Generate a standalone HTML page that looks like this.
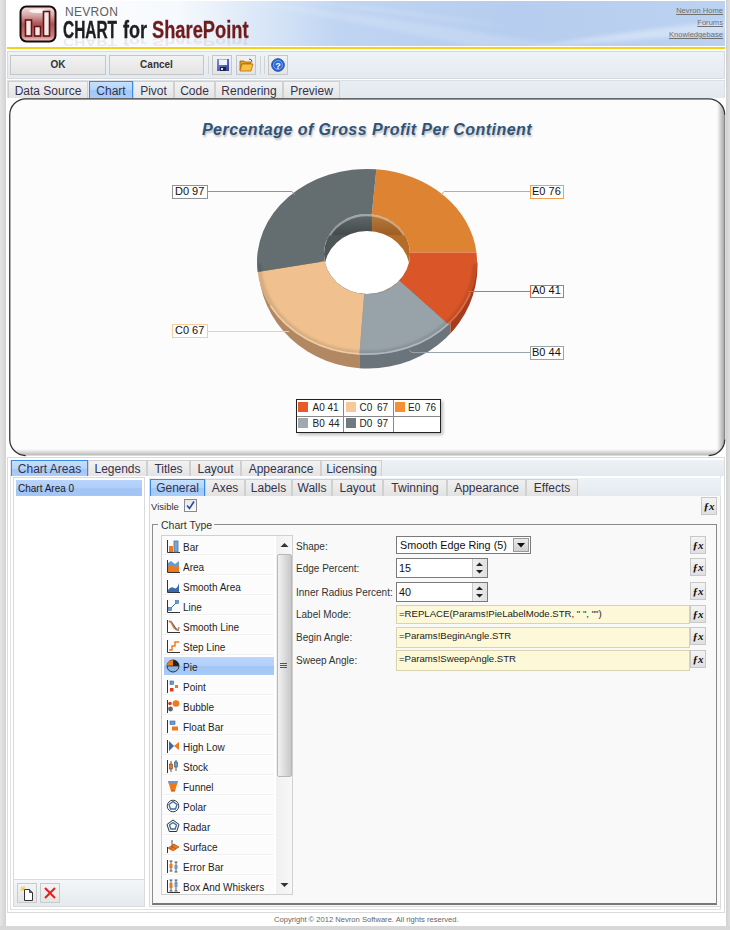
<!DOCTYPE html>
<html><head><meta charset="utf-8">
<style>
*{box-sizing:border-box;margin:0;padding:0}
html,body{width:730px;height:930px;overflow:hidden;background:#fff}
body{position:relative;font-family:"Liberation Sans",sans-serif;color:#222}
.a{position:absolute}
.t{position:absolute;white-space:nowrap;line-height:1}
.tab{position:absolute;height:17px;background:linear-gradient(#f2f2f2,#e4e4e4);border:1px solid #d0d0d0;border-bottom:none;font-size:12px;color:#33334d;text-align:center;line-height:18px;white-space:nowrap}
.tab.sel{background:linear-gradient(#c6e0fd 0%,#b4d4fb 50%,#a2c8f7 52%,#aaccf8 100%);border-color:#3c8ae8}
.stab{position:absolute;height:17px;background:linear-gradient(#f0f0f0,#e2e2e2);border:1px solid #d0d0d0;border-bottom:none;font-size:12px;color:#33334d;text-align:center;line-height:16px;white-space:nowrap}
.stab.sel{background:linear-gradient(#c6e0fd 0%,#b4d4fb 50%,#a2c8f7 52%,#aaccf8 100%);border-color:#3c8ae8}
.lbl{position:absolute;font-size:10px;color:#333;white-space:nowrap;line-height:1}
.fx{position:absolute;width:16px;height:18px;background:linear-gradient(#f4f4f4,#e0e0e0);border:1px solid #c8c8c8;font-family:"Liberation Serif",serif;font-style:italic;font-weight:bold;font-size:11px;text-align:center;line-height:16px;color:#111}
.yel{position:absolute;left:396px;width:294px;background:#fcf8d8;border:1px solid #d8d4b0;font-size:9.6px;color:#222;padding:1.5px 0 0 2px;white-space:nowrap}
.row{position:absolute;left:162px;width:112px;height:20px;border-bottom:1px solid #f0f0f0;background:#fcfcfc}
.row span{position:absolute;left:21px;top:6px;font-size:10px;line-height:1;color:#333;white-space:nowrap}
.row svg{position:absolute;left:4px;top:3px}
</style></head><body>

<!-- outer gray bands -->
<div class="a" style="left:0;top:0;width:6px;height:930px;background:linear-gradient(90deg,#e6e6e6,#d2d2d2)"></div>
<div class="a" style="left:726px;top:0;width:4px;height:930px;background:linear-gradient(90deg,#d0d0d0,#e0e0e0)"></div>
<div class="a" style="left:0;top:926px;width:730px;height:4px;background:#d8d8d8"></div>

<!-- header -->
<div class="a" style="left:7px;top:1px;width:718px;height:45px;overflow:hidden;background:linear-gradient(90deg,#ffffff 0%,#f6f9fd 24%,#dde9f8 34%,#c0d5f2 46%,#b6cdef 70%,#bcd2f1 100%)">
<svg class="a" style="left:0;top:0" width="718" height="45" viewBox="0 0 718 45">
<defs><filter id="hb" x="-20%" y="-50%" width="140%" height="200%"><feGaussianBlur stdDeviation="2"/></filter></defs>
<path d="M260 -4 Q380 8 520 28 Q410 14 260 -4z" fill="#fff" opacity="0.5" filter="url(#hb)"/>
<path d="M240 0 Q400 18 560 46 L470 46 Q350 22 240 0z" fill="#fff" opacity="0.15" filter="url(#hb)"/>
<path d="M520 47 Q620 30 718 20 L718 32 Q640 38 520 47z" fill="#fff" opacity="0.35" filter="url(#hb)"/>
</svg>
<div class="t" style="left:56.4px;top:46px;font-size:23.5px;font-weight:bold;color:#1e1e1e;transform:scaleX(0.657) scaleY(-0.5);transform-origin:0 0;opacity:0.08">CHART</div>
<div class="t" style="left:116px;top:46px;font-size:23.5px;font-weight:bold;color:#1e1e1e;transform:scaleX(0.766) scaleY(-0.5);transform-origin:0 0;opacity:0.08">for</div>
<div class="t" style="left:145px;top:46px;font-size:23.5px;font-weight:bold;color:#6e1c1c;transform:scaleX(0.778) scaleY(-0.5);transform-origin:0 0;opacity:0.08">SharePoint</div>
</div>
<div class="a" style="left:7px;top:47px;width:718px;height:2px;background:#f2d21e"></div>

<!-- logo -->
<svg class="a" style="left:19px;top:5px" width="38" height="38" viewBox="0 0 38 38">
<defs>
<linearGradient id="lg1" x1="0" y1="0" x2="0" y2="1"><stop offset="0" stop-color="#f4e4e4"/><stop offset="0.25" stop-color="#d8a8a8"/><stop offset="0.5" stop-color="#a85454"/><stop offset="0.85" stop-color="#c88080"/><stop offset="1" stop-color="#f0d8d8"/></linearGradient>
</defs>
<rect x="1.5" y="1.5" width="35" height="35" rx="6" fill="url(#lg1)" stroke="#1a0a0a" stroke-width="2"/>
<ellipse cx="19" cy="6" rx="9" ry="2" fill="#fff" opacity="0.8"/>
<rect x="6.5" y="15" width="6" height="16" fill="#f4e8e8" stroke="#6a1010" stroke-width="1.6"/>
<rect x="15.5" y="21.5" width="6" height="9.5" fill="#f4e8e8" stroke="#6a1010" stroke-width="1.6"/>
<rect x="24.5" y="6.5" width="6" height="24.5" fill="#f4e8e8" stroke="#6a1010" stroke-width="1.6"/>
</svg>
<div class="t" style="left:65px;top:6px;font-size:12px;color:#606060;letter-spacing:0.3px">NEVRON</div>
<div class="t" style="left:63.4px;top:19px;font-size:23.5px;font-weight:bold;color:#1e1e1e;transform:scaleX(0.657);transform-origin:0 0;-webkit-text-stroke:0.4px #1e1e1e">CHART</div>
<div class="t" style="left:123px;top:19px;font-size:23.5px;font-weight:bold;color:#1e1e1e;transform:scaleX(0.766);transform-origin:0 0;-webkit-text-stroke:0.3px #1e1e1e">for</div>
<div class="t" style="left:152px;top:19px;font-size:23.5px;font-weight:bold;color:#6e1c1c;transform:scaleX(0.778);transform-origin:0 0;-webkit-text-stroke:0.3px #6e1c1c">SharePoint</div>
<div class="t" style="right:7px;top:7px;font-size:7.6px;color:#707070;text-decoration:underline;text-align:right">Nevron Home</div>
<div class="t" style="right:7px;top:19px;font-size:7.6px;color:#707070;text-decoration:underline">Forums</div>
<div class="t" style="right:7px;top:31px;font-size:7.6px;color:#707070;text-decoration:underline">Knowledgebase</div>

<!-- toolbar -->
<div class="a" style="left:7px;top:51px;width:718px;height:28px;background:linear-gradient(#eef3f6,#e3eaf0);border:1px solid #d6dade"></div>
<div class="a" style="left:10px;top:55px;width:96px;height:20px;background:linear-gradient(#f2f2f2,#e4e4e4);border:1px solid #c6c6c6;font-size:10px;font-weight:bold;color:#333;text-align:center;line-height:18px">OK</div>
<div class="a" style="left:109px;top:55px;width:95px;height:20px;background:linear-gradient(#f2f2f2,#e4e4e4);border:1px solid #c6c6c6;font-size:10px;font-weight:bold;color:#333;text-align:center;line-height:18px">Cancel</div>
<div class="a" style="left:208px;top:56px;width:1px;height:18px;background:#d0d4d8"></div>
<div class="a" style="left:212px;top:55px;width:20px;height:20px;background:linear-gradient(#f2f2f2,#e4e4e4);border:1px solid #c6c6c6"></div>
<div class="a" style="left:236px;top:55px;width:20px;height:20px;background:linear-gradient(#f2f2f2,#e4e4e4);border:1px solid #c6c6c6"></div>
<div class="a" style="left:260px;top:56px;width:1px;height:18px;background:#d0d4d8"></div><div class="a" style="left:264px;top:56px;width:1px;height:18px;background:#d0d4d8"></div>
<div class="a" style="left:268px;top:55px;width:20px;height:20px;background:linear-gradient(#f2f2f2,#e4e4e4);border:1px solid #c6c6c6"></div>
<svg class="a" style="left:217px;top:59px" width="12" height="12" viewBox="0 0 12 12">
<defs><linearGradient id="sv" x1="0" y1="0" x2="1" y2="1"><stop offset="0" stop-color="#8090e0"/><stop offset="1" stop-color="#3040a0"/></linearGradient></defs>
<rect x="0" y="0" width="12" height="12" fill="url(#sv)"/>
<rect x="2" y="0.5" width="8" height="5.5" fill="#eef2fc"/>
<rect x="3" y="8" width="6" height="4" fill="#202040"/><rect x="4" y="9" width="2" height="2" fill="#e0e0e0"/>
</svg>
<svg class="a" style="left:239px;top:58px" width="15" height="14" viewBox="0 0 15 14">
<path d="M1 3h4l1 1h6v2H3L1 12z" fill="#e0a020" stroke="#a06010" stroke-width="0.8"/>
<path d="M3 6h11l-2 7H1z" fill="#f8c040" stroke="#b07010" stroke-width="0.8"/>
<path d="M10 1q3 0 3 3" fill="none" stroke="#4060a0" stroke-width="1"/>
</svg>
<svg class="a" style="left:271px;top:58px" width="14" height="14" viewBox="0 0 14 14">
<circle cx="7" cy="7" r="6.3" fill="#2a6ad8" stroke="#1a4aa8"/>
<circle cx="7" cy="7" r="4.5" fill="none" stroke="#80b0f0" stroke-width="0.8"/>
<text x="7" y="10.5" font-size="9" font-weight="bold" fill="#fff" text-anchor="middle" font-family="Liberation Sans">?</text>
</svg>

<!-- main tabs -->
<div class="a" style="left:7px;top:80px;width:718px;height:18px;background:linear-gradient(#e8eef3,#e2e9ef);border:1px solid #dadfe3;border-bottom:none"></div>
<div class="tab" style="left:8px;top:81px;width:80px">Data Source</div>
<div class="tab sel" style="left:89px;top:81px;width:44px">Chart</div>
<div class="tab" style="left:133px;top:81px;width:41px">Pivot</div>
<div class="tab" style="left:174px;top:81px;width:41px">Code</div>
<div class="tab" style="left:215px;top:81px;width:68px">Rendering</div>
<div class="tab" style="left:283px;top:81px;width:57px">Preview</div>


<!-- chart panel -->
<svg class="a" style="left:0;top:90px" width="730" height="370" viewBox="0 90 730 370">
<defs>
<clipPath id="cpanel"><path d="M25.75,98.75 H708.75 A16,16 0 0 1 724.75,114.75 V439.5 A16,16 0 0 1 708.75,455.5 H25.75 A16,16 0 0 1 9.75,439.5 V114.75 A16,16 0 0 1 25.75,98.75 Z"/></clipPath>
<linearGradient id="shR" x1="717" y1="0" x2="725" y2="0" gradientUnits="userSpaceOnUse"><stop offset="0" stop-color="#000" stop-opacity="0"/><stop offset="1" stop-color="#000" stop-opacity="0.38"/></linearGradient>
<linearGradient id="shB" x1="0" y1="449" x2="0" y2="456" gradientUnits="userSpaceOnUse"><stop offset="0" stop-color="#000" stop-opacity="0"/><stop offset="1" stop-color="#000" stop-opacity="0.30"/></linearGradient>
</defs>
<g clip-path="url(#cpanel)">
<rect x="0" y="90" width="730" height="370" fill="#fcfcfc"/>
<rect x="700" y="90" width="30" height="370" fill="url(#shR)"/>
<rect x="0" y="440" width="730" height="20" fill="url(#shB)"/>
</g>
<path d="M25.75,455.5 A16,16 0 0 1 9.75,439.5 V114.75 A16,16 0 0 1 25.75,98.75 H708.75 A16,16 0 0 1 724.75,114.75" fill="none" stroke="#333" stroke-width="1.25"/>
<path d="M724.75,114.75 V439.5" fill="none" stroke="#777" stroke-width="1"/>
<path d="M724.75,439.5 A16,16 0 0 1 708.75,455.5" fill="none" stroke="#333" stroke-width="1.25"/>
</svg>
<div class="t" style="left:202px;top:122px;font-size:16px;font-weight:bold;font-style:italic;color:#30537a;letter-spacing:0.45px;text-shadow:1px 2px 2px rgba(0,0,0,0.25)">Percentage of Gross Profit Per Continent</div>
<!--DONUT-->
<svg class="a" style="left:0;top:0" width="730" height="460" viewBox="0 0 730 460">
<defs>
<clipPath id="hole"><ellipse cx="367" cy="254" rx="43" ry="40"/></clipPath>
<clipPath id="topface"><ellipse cx="367" cy="262" rx="110" ry="93"/></clipPath>
<linearGradient id="sideg" x1="0" y1="0" x2="0" y2="1"><stop offset="0" stop-color="#000" stop-opacity="0.10"/><stop offset="0.5" stop-color="#000" stop-opacity="0"/><stop offset="1" stop-color="#fff" stop-opacity="0.05"/></linearGradient>
<linearGradient id="holeg" x1="0" y1="0" x2="0" y2="1"><stop offset="0" stop-color="#fff" stop-opacity="0.18"/><stop offset="1" stop-color="#000" stop-opacity="0.12"/></linearGradient>
<filter id="blur1"><feGaussianBlur stdDeviation="1.2"/></filter><filter id="blur05" x="-10%" y="-10%" width="120%" height="120%"><feGaussianBlur stdDeviation="0.5"/></filter>
</defs>
<clipPath id="sC"><rect x="200" y="262" width="159.3" height="140"/></clipPath>
<clipPath id="sB"><rect x="359.3" y="262" width="91.1" height="140"/></clipPath>
<clipPath id="sA"><rect x="450.4" y="262" width="100" height="140"/></clipPath>
<ellipse cx="368" cy="266" rx="109.5" ry="102.5" fill="#b28862" clip-path="url(#sC)"/>
<ellipse cx="368" cy="266" rx="109.5" ry="102.5" fill="#6b747a" clip-path="url(#sB)"/>
<ellipse cx="368" cy="266" rx="109.5" ry="102.5" fill="#a63c1e" clip-path="url(#sA)"/>
<path d="M376.37,169.34 A110,93 0 0 1 476.42,252.45 L409.97,252.60 A43,40 0 0 0 371.77,214.25 Z" fill="#dd8331"/>
<path d="M476.42,252.45 A110,93 0 0 1 448.57,324.40 L399.29,280.42 A43,40 0 0 0 409.97,252.60 Z" fill="#da5629"/>
<path d="M448.57,324.40 A110,93 0 0 1 359.34,354.77 L364.18,293.91 A43,40 0 0 0 399.29,280.42 Z" fill="#98a2a9"/>
<path d="M359.34,354.77 A110,93 0 0 1 257.63,271.94 L324.72,261.30 A43,40 0 0 0 364.18,293.91 Z" fill="#f0c18f"/>
<path d="M257.63,271.94 A110,93 0 0 1 376.37,169.34 L371.77,214.25 A43,40 0 0 0 324.72,261.30 Z" fill="#646e70"/>
<g clip-path="url(#topface)">
<path d="M476.98,263.86 A110,93 0 0 1 257.02,263.86" fill="none" stroke="#000" stroke-opacity="0.10" stroke-width="9" filter="url(#blur1)"/>
</g>
<path d="M470.33,293.09 A110,93 0 0 1 448.57,323.60" fill="none" stroke="#f08060" stroke-width="1.8" stroke-opacity="0.6" filter="url(#blur05)"/>
<path d="M448.57,323.60 A110,93 0 0 1 359.34,353.97" fill="none" stroke="#c8d0d6" stroke-width="1.8" stroke-opacity="0.6" filter="url(#blur05)"/>
<path d="M359.34,353.97 A110,93 0 0 1 270.47,305.79" fill="none" stroke="#fde0bc" stroke-width="1.8" stroke-opacity="0.6" filter="url(#blur05)"/>
<g clip-path="url(#hole)">
<rect x="320" y="210" width="52" height="90" fill="#4e5658"/>
<rect x="371.8" y="210" width="45" height="90" fill="#b46c26"/>
<rect x="320" y="210" width="100" height="25" fill="url(#holeg)"/>
<path d="M329.76,235.20 A43,40 0 0 1 404.24,235.20" fill="none" stroke="#fff" stroke-opacity="0.4" stroke-width="2.2" filter="url(#blur05)"/>
<ellipse cx="367" cy="271" rx="43" ry="40" fill="#fff"/>
</g>
<polyline points="208,191.5 292,191.5 295,195" fill="none" stroke="#8a949a" stroke-width="1"/>
<polyline points="441,195 444,191.5 530,191.5" fill="none" stroke="#f0a050" stroke-width="1"/>
<polyline points="468,291.5 530,291.5" fill="none" stroke="#e8683c" stroke-width="1"/>
<polyline points="409,350 412,352.5 530,352.5" fill="none" stroke="#9aa4ae" stroke-width="1"/>
<polyline points="208,331.5 289,331.5" fill="none" stroke="#f8cc9c" stroke-width="1"/>
</svg>
<!--/DONUT-->
<div class="a" style="left:172px;top:185px;width:36px;height:14px;border:1px solid #8a949a;background:#fff;font-size:11px;line-height:10px;padding-left:2px;color:#111;white-space:nowrap">D0 97</div>
<div class="a" style="left:530px;top:185px;width:34px;height:14px;border:1px solid #f0a050;background:#fff;font-size:11px;line-height:10px;padding-left:1px;color:#111;white-space:nowrap">E0 76</div>
<div class="a" style="left:530px;top:285px;width:34px;height:13px;border:1px solid #e8683c;background:#fff;font-size:11px;line-height:9px;padding-left:1px;color:#111;white-space:nowrap">A0 41</div>
<div class="a" style="left:530px;top:346px;width:34px;height:14px;border:1px solid #9aa4ae;background:#fff;font-size:11px;line-height:10px;padding-left:1px;color:#111;white-space:nowrap">B0 44</div>
<div class="a" style="left:172px;top:324px;width:36px;height:14px;border:1px solid #f8cc9c;background:#fff;font-size:11px;line-height:10px;padding-left:2px;color:#111;white-space:nowrap">C0 67</div>

<!-- legend -->
<div class="a" style="left:296px;top:399px;width:145px;height:34px;border:1px solid #222;background:#fff;box-shadow:2px 2px 3px rgba(0,0,0,0.25)"></div>
<div class="a" style="left:343px;top:400px;width:1px;height:32px;background:#888"></div>
<div class="a" style="left:393px;top:400px;width:1px;height:32px;background:#888"></div>
<div class="a" style="left:297px;top:416px;width:143px;height:1px;background:#888"></div>
<div class="a" style="left:298px;top:402px;width:10px;height:10px;background:#e85a28"></div>
<div class="a" style="left:346px;top:402px;width:10px;height:10px;background:#f8c898"></div>
<div class="a" style="left:395px;top:402px;width:10px;height:10px;background:#f49030"></div>
<div class="a" style="left:298px;top:418px;width:10px;height:10px;background:#a0a8b0"></div>
<div class="a" style="left:346px;top:418px;width:10px;height:10px;background:#707a80"></div>
<div class="t" style="left:312.5px;top:402.5px;font-size:10px;color:#222">A0 41</div>
<div class="t" style="left:359.5px;top:402.5px;font-size:10px;color:#222;word-spacing:2px">C0 67</div>
<div class="t" style="left:408px;top:402.5px;font-size:10px;color:#222;word-spacing:2px">E0 76</div>
<div class="t" style="left:312.5px;top:418.8px;font-size:10px;color:#222;word-spacing:1px">B0 44</div>
<div class="t" style="left:359.5px;top:418.8px;font-size:10px;color:#222;word-spacing:2px">D0 97</div>


<!-- bottom editor -->
<div class="a" style="left:7px;top:457px;width:718px;height:456px;border:1px solid #dcdcdc;background:#fff"></div>
<div class="a" style="left:10px;top:460px;width:711px;height:450px;border:1px solid #e2e2e2;border-top:none;background:#fff"></div>
<div class="a" style="left:382px;top:460px;width:342px;height:16px;background:linear-gradient(#eef2f6,#e4eaf0)"></div>
<div class="tab sel" style="left:11px;top:460px;width:77px;height:16px;line-height:17px">Chart Areas</div>
<div class="tab" style="left:88px;top:460px;width:59px;height:16px;line-height:17px">Legends</div>
<div class="tab" style="left:147px;top:460px;width:43px;height:16px;line-height:17px">Titles</div>
<div class="tab" style="left:190px;top:460px;width:51px;height:16px;line-height:17px">Layout</div>
<div class="tab" style="left:241px;top:460px;width:80px;height:16px;line-height:17px">Appearance</div>
<div class="tab" style="left:321px;top:460px;width:61px;height:16px;line-height:17px">Licensing</div>

<!-- left list panel -->
<div class="a" style="left:13px;top:477px;width:132px;height:430px;border:1px solid #dadada;background:#fff"></div>
<div class="a" style="left:16px;top:480px;width:126px;height:16px;background:linear-gradient(#b8d4fc 0%,#b0cefa 50%,#a0c4f4 55%,#a4c6f6 100%)"></div>
<div class="t" style="left:18px;top:484px;font-size:10px;color:#1a1a1a">Chart Area 0</div>
<div class="a" style="left:14px;top:879px;width:130px;height:27px;background:linear-gradient(#f4f6f8,#e4eaee);border-top:1px solid #d8dcdf"></div>
<div class="a" style="left:17px;top:883px;width:20px;height:20px;background:linear-gradient(#f4f4f4,#e4e4e4);border:1px solid #cacaca"></div>
<div class="a" style="left:40px;top:883px;width:20px;height:20px;background:linear-gradient(#f4f4f4,#e4e4e4);border:1px solid #cacaca"></div>
<svg class="a" style="left:20px;top:886px" width="14" height="15" viewBox="0 0 14 15">
<path d="M4.5 3.5h5l3 3v8h-8z" fill="#fff" stroke="#333" stroke-width="1"/>
<path d="M9.5 3.5v3h3" fill="#4a6ab0" stroke="#333" stroke-width="0.8"/>
<path d="M1 1l3 3M4 0v3M0 4h3" stroke="#e8d040" stroke-width="1.2"/>
</svg>
<svg class="a" style="left:43px;top:886px" width="14" height="14" viewBox="0 0 14 14">
<path d="M2 2L12 12M12 2L2 12" stroke="#e02020" stroke-width="2"/>
</svg>

<!-- right content panel -->
<div class="a" style="left:150px;top:478px;width:571px;height:18px;background:linear-gradient(#eef2f6,#e4eaf0)"></div>
<div class="a" style="left:149px;top:496px;width:572px;height:411px;border:1px solid #dadada;border-top:none;background:#f9f9f9"></div>
<div class="a" style="left:149px;top:478px;width:1px;height:18px;background:#dadada"></div>
<div class="stab sel" style="left:150px;top:479px;width:55px">General</div>
<div class="stab" style="left:205px;top:479px;width:40px">Axes</div>
<div class="stab" style="left:245px;top:479px;width:47px">Labels</div>
<div class="stab" style="left:292px;top:479px;width:40px">Walls</div>
<div class="stab" style="left:332px;top:479px;width:51px">Layout</div>
<div class="stab" style="left:383px;top:479px;width:64px">Twinning</div>
<div class="stab" style="left:447px;top:479px;width:79px">Appearance</div>
<div class="stab" style="left:526px;top:479px;width:52px">Effects</div>

<div class="lbl" style="left:151px;top:502px;font-size:9.5px">Visible</div>
<div class="a" style="left:184px;top:499px;width:13px;height:13px;border:1px solid #8a8a8a;background:linear-gradient(#e8e8e8,#fafafa)"></div>
<svg class="a" style="left:185px;top:500px" width="11" height="11" viewBox="0 0 11 11"><path d="M2 5.5l2.5 3L9 1.5" fill="none" stroke="#2a4aa0" stroke-width="1.6"/></svg>
<div class="fx" style="left:701px;top:497px">&#x192;x</div>

<!-- group box -->
<div class="a" style="left:152px;top:524px;width:565px;height:381px;border:1px solid #8c8c8c;border-right-color:#888;border-bottom:2px solid #777;border-right-width:1.5px"></div>
<div class="a" style="left:158px;top:519px;width:56px;height:10px;background:#f9f9f9"></div>
<div class="t" style="left:161px;top:520px;font-size:10.5px;color:#333">Chart Type</div>

<!-- list box -->
<div class="a" style="left:161px;top:535px;width:132px;height:360px;border:1px solid #d0d0d0;background:#fff;overflow:hidden">
<div class="a" style="left:0;top:0px;width:112px;height:19px;background:#fcfcfc;border-bottom:1px solid #f2f2f2"></div>
<svg class="a" style="left:4px;top:3px" width="15" height="15" viewBox="0 0 15 15"><path d="M1.5 1v12.5H14" fill="none" stroke="#333" stroke-width="1"/><rect x="3" y="7" width="4" height="6" fill="#f07818"/><rect x="8" y="2" width="4" height="11" fill="#7aa6d6" stroke="#4a76a6" stroke-width="0.8"/></svg>
<div class="t" style="left:21px;top:7px;font-size:10px;color:#1e1e24">Bar</div>
<div class="a" style="left:0;top:20px;width:112px;height:19px;background:#fcfcfc;border-bottom:1px solid #f2f2f2"></div>
<svg class="a" style="left:4px;top:23px" width="15" height="15" viewBox="0 0 15 15"><path d="M1.5 1v12.5H14" fill="none" stroke="#333" stroke-width="1"/><path d="M2 4l3-2 4 3 4-3v11H2z" fill="#6a9ad0"/><path d="M2 8l3-2 4 2 4-1v6H2z" fill="#f07818"/></svg>
<div class="t" style="left:21px;top:27px;font-size:10px;color:#1e1e24">Area</div>
<div class="a" style="left:0;top:40px;width:112px;height:19px;background:#fcfcfc;border-bottom:1px solid #f2f2f2"></div>
<svg class="a" style="left:4px;top:43px" width="15" height="15" viewBox="0 0 15 15"><path d="M1.5 1v12.5H14" fill="none" stroke="#333" stroke-width="1"/><path d="M2 11q3-4 6-2t5-5v9H2z" fill="#3a6aa8"/></svg>
<div class="t" style="left:21px;top:47px;font-size:10px;color:#1e1e24">Smooth Area</div>
<div class="a" style="left:0;top:60px;width:112px;height:19px;background:#fcfcfc;border-bottom:1px solid #f2f2f2"></div>
<svg class="a" style="left:4px;top:63px" width="15" height="15" viewBox="0 0 15 15"><path d="M1.5 1v12.5H14" fill="none" stroke="#333" stroke-width="1"/><path d="M4 10L11 3" stroke="#3a6aa8" stroke-width="1"/><rect x="2.5" y="8.5" width="3" height="3" fill="#6a9ad0" stroke="#3a6aa8" stroke-width="0.6"/><rect x="9.5" y="1.5" width="3" height="3" fill="#6a9ad0" stroke="#3a6aa8" stroke-width="0.6"/></svg>
<div class="t" style="left:21px;top:67px;font-size:10px;color:#1e1e24">Line</div>
<div class="a" style="left:0;top:80px;width:112px;height:19px;background:#fcfcfc;border-bottom:1px solid #f2f2f2"></div>
<svg class="a" style="left:4px;top:83px" width="15" height="15" viewBox="0 0 15 15"><path d="M1.5 1v12.5H14" fill="none" stroke="#333" stroke-width="1"/><path d="M3 3C5 1 6 4 8 7S11 12 13 11" fill="none" stroke="#3a6aa8" stroke-width="1.4"/><path d="M3 2C6 2 6 8 9 10S12 11 13 8" fill="none" stroke="#f07818" stroke-width="1.3"/></svg>
<div class="t" style="left:21px;top:87px;font-size:10px;color:#1e1e24">Smooth Line</div>
<div class="a" style="left:0;top:100px;width:112px;height:19px;background:#fcfcfc;border-bottom:1px solid #f2f2f2"></div>
<svg class="a" style="left:4px;top:103px" width="15" height="15" viewBox="0 0 15 15"><path d="M1.5 1v12.5H14" fill="none" stroke="#333" stroke-width="1"/><path d="M3 11h3V7h3V3h4" fill="none" stroke="#f07818" stroke-width="1.4"/></svg>
<div class="t" style="left:21px;top:107px;font-size:10px;color:#1e1e24">Step Line</div>
<div class="a" style="left:2px;top:121px;width:110px;height:18px;background:linear-gradient(#bcd6fc 0%,#b2d0fa 50%,#a2c6f4 52%,#a8caf6 100%)"></div>
<svg class="a" style="left:4px;top:123px" width="15" height="15" viewBox="0 0 15 15"><circle cx="7" cy="7" r="6" fill="#8ab6e0" stroke="#333" stroke-width="1"/><path d="M7 7V1A6 6 0 0 0 1 7z" fill="#f07818"/><path d="M7 7V1A6 6 0 0 1 13 7z" fill="#222"/><path d="M1 7h12" stroke="#333" stroke-width="0.8"/></svg>
<div class="t" style="left:21px;top:127px;font-size:10px;color:#1e1e24">Pie</div>
<div class="a" style="left:0;top:140px;width:112px;height:19px;background:#fcfcfc;border-bottom:1px solid #f2f2f2"></div>
<svg class="a" style="left:4px;top:143px" width="15" height="15" viewBox="0 0 15 15"><path d="M1.5 1v13" stroke="#333" stroke-width="1"/><rect x="4" y="2" width="3.5" height="3.5" fill="#6a9ad0" stroke="#3a6aa8" stroke-width="0.6"/><rect x="9" y="6" width="3" height="3" fill="#f07818"/><rect x="4" y="9" width="3.5" height="3.5" fill="#e03a18"/></svg>
<div class="t" style="left:21px;top:147px;font-size:10px;color:#1e1e24">Point</div>
<div class="a" style="left:0;top:160px;width:112px;height:19px;background:#fcfcfc;border-bottom:1px solid #f2f2f2"></div>
<svg class="a" style="left:4px;top:163px" width="15" height="15" viewBox="0 0 15 15"><path d="M1.5 1v13" stroke="#333" stroke-width="1"/><circle cx="10" cy="4.5" r="3.3" fill="#f07818"/><circle cx="4" cy="4.5" r="1.8" fill="#e03a18"/><circle cx="4.5" cy="10" r="2.4" fill="#666"/></svg>
<div class="t" style="left:21px;top:167px;font-size:10px;color:#1e1e24">Bubble</div>
<div class="a" style="left:0;top:180px;width:112px;height:19px;background:#fcfcfc;border-bottom:1px solid #f2f2f2"></div>
<svg class="a" style="left:4px;top:183px" width="15" height="15" viewBox="0 0 15 15"><path d="M1.5 1v13" stroke="#333" stroke-width="1"/><rect x="4" y="2" width="5" height="3.5" fill="#6a9ad0" stroke="#3a6aa8" stroke-width="0.6"/><rect x="6" y="7.5" width="6" height="4" fill="#f07818"/></svg>
<div class="t" style="left:21px;top:187px;font-size:10px;color:#1e1e24">Float Bar</div>
<div class="a" style="left:0;top:200px;width:112px;height:19px;background:#fcfcfc;border-bottom:1px solid #f2f2f2"></div>
<svg class="a" style="left:4px;top:203px" width="15" height="15" viewBox="0 0 15 15"><path d="M1.5 1v13" stroke="#333" stroke-width="1"/><path d="M3 2l5 5-5 5z" fill="#3a6aa8"/><path d="M13 3L8 7l5 4z" fill="#f07818"/></svg>
<div class="t" style="left:21px;top:207px;font-size:10px;color:#1e1e24">High Low</div>
<div class="a" style="left:0;top:220px;width:112px;height:19px;background:#fcfcfc;border-bottom:1px solid #f2f2f2"></div>
<svg class="a" style="left:4px;top:223px" width="15" height="15" viewBox="0 0 15 15"><path d="M1.5 1v13" stroke="#333" stroke-width="1"/><path d="M5 2v11M10 1v11" stroke="#333" stroke-width="0.8"/><rect x="3.5" y="5" width="3" height="5" fill="#f07818" stroke="#333" stroke-width="0.5"/><rect x="8.5" y="3" width="3" height="5" fill="#6a9ad0" stroke="#333" stroke-width="0.5"/></svg>
<div class="t" style="left:21px;top:227px;font-size:10px;color:#1e1e24">Stock</div>
<div class="a" style="left:0;top:240px;width:112px;height:19px;background:#fcfcfc;border-bottom:1px solid #f2f2f2"></div>
<svg class="a" style="left:4px;top:243px" width="15" height="15" viewBox="0 0 15 15"><path d="M2 2h10l-3 10H5z" fill="#f07818"/><path d="M2 2h10l-1 3H3z" fill="#6a9ad0"/><path d="M5 12h4" stroke="#c04010" stroke-width="1"/></svg>
<div class="t" style="left:21px;top:247px;font-size:10px;color:#1e1e24">Funnel</div>
<div class="a" style="left:0;top:260px;width:112px;height:19px;background:#fcfcfc;border-bottom:1px solid #f2f2f2"></div>
<svg class="a" style="left:4px;top:263px" width="15" height="15" viewBox="0 0 15 15"><circle cx="7" cy="7" r="5.8" fill="none" stroke="#444" stroke-width="1"/><path d="M7 2.5l4 3-1.5 4.5h-5L3 5.5z" fill="none" stroke="#3a6aa8" stroke-width="1.3"/></svg>
<div class="t" style="left:21px;top:267px;font-size:10px;color:#1e1e24">Polar</div>
<div class="a" style="left:0;top:280px;width:112px;height:19px;background:#fcfcfc;border-bottom:1px solid #f2f2f2"></div>
<svg class="a" style="left:4px;top:283px" width="15" height="15" viewBox="0 0 15 15"><path d="M7 1l6 4.5-2.3 7H3.3L1 5.5z" fill="none" stroke="#333" stroke-width="1"/><path d="M7 3.5l3.5 2.5-1.3 4H4.8L3.5 6z" fill="none" stroke="#3a6aa8" stroke-width="1.3"/></svg>
<div class="t" style="left:21px;top:287px;font-size:10px;color:#1e1e24">Radar</div>
<div class="a" style="left:0;top:300px;width:112px;height:19px;background:#fcfcfc;border-bottom:1px solid #f2f2f2"></div>
<svg class="a" style="left:4px;top:303px" width="15" height="15" viewBox="0 0 15 15"><path d="M1.5 8v6" stroke="#333" stroke-width="1"/><path d="M6 1v5" stroke="#333" stroke-width="0.8"/><path d="M2 9l6-4 5 3-6 4z" fill="#f07818" stroke="#a04810" stroke-width="0.6"/><path d="M5 7l5 3M8 5L4.5 10.5" stroke="#a04810" stroke-width="0.6"/></svg>
<div class="t" style="left:21px;top:307px;font-size:10px;color:#1e1e24">Surface</div>
<div class="a" style="left:0;top:320px;width:112px;height:19px;background:#fcfcfc;border-bottom:1px solid #f2f2f2"></div>
<svg class="a" style="left:4px;top:323px" width="15" height="15" viewBox="0 0 15 15"><path d="M1.5 1v13" stroke="#333" stroke-width="1"/><path d="M3.5 2h3M5 2v10M3.5 12h3M8.5 3h3M10 3v10M8.5 13h3" stroke="#333" stroke-width="0.8"/><rect x="3.5" y="5" width="3" height="4" fill="#f07818"/><rect x="8.5" y="6" width="3" height="4" fill="#6a9ad0"/></svg>
<div class="t" style="left:21px;top:327px;font-size:10px;color:#1e1e24">Error Bar</div>
<div class="a" style="left:0;top:340px;width:112px;height:19px;background:#fcfcfc;border-bottom:1px solid #f2f2f2"></div>
<svg class="a" style="left:4px;top:343px" width="15" height="15" viewBox="0 0 15 15"><path d="M1.5 1v12.5H14" fill="none" stroke="#333" stroke-width="1"/><path d="M3.5 1h3M5 1v11M3.5 12h3M8.5 1h3M10 1v11M8.5 12h3" stroke="#333" stroke-width="0.8"/><rect x="3.5" y="4" width="3" height="5" fill="#f07818"/><rect x="8.5" y="3" width="3" height="5" fill="#6a9ad0"/></svg>
<div class="t" style="left:21px;top:347px;font-size:10px;color:#1e1e24">Box And Whiskers</div>
<div class="a" style="left:114px;top:0;width:17px;height:358px;background:linear-gradient(90deg,#f0f0f0,#f8f8f8)"></div>
<svg class="a" style="left:118px;top:6px" width="9" height="6" viewBox="0 0 9 6"><path d="M0.5 5L4.5 1l4 4z" fill="#333"/></svg>
<svg class="a" style="left:118px;top:346px" width="9" height="6" viewBox="0 0 9 6"><path d="M0.5 1L4.5 5l4-4z" fill="#333"/></svg>
<div class="a" style="left:115px;top:18px;width:15px;height:223px;border:1px solid #b8b8b8;border-radius:2px;background:linear-gradient(90deg,#f2f2f2,#d8d8d8 60%,#c8c8c8)"></div>
<div class="a" style="left:118px;top:127px;width:7px;height:1px;background:#555;box-shadow:0 2px 0 #555,0 4px 0 #555"></div>
</div>
<!-- form -->
<div class="lbl" style="left:296px;top:542px">Shape:</div>
<div class="lbl" style="left:296px;top:564px">Edge Percent:</div>
<div class="lbl" style="left:296px;top:588px">Inner Radius Percent:</div>
<div class="lbl" style="left:296px;top:610px">Label Mode:</div>
<div class="lbl" style="left:296px;top:633px">Begin Angle:</div>
<div class="lbl" style="left:296px;top:656px">Sweep Angle:</div>

<div class="a" style="left:396px;top:536px;width:135px;height:18px;border:1px solid #7a7a7a;background:#fff"></div>
<div class="t" style="left:400px;top:540px;font-size:10.8px;color:#111">Smooth Edge Ring (5)</div>
<div class="a" style="left:513px;top:538px;width:16px;height:14px;background:linear-gradient(#eaeaea,#cfcfcf);border:1px solid #9a9a9a"></div>
<svg class="a" style="left:517px;top:543px" width="8" height="5" viewBox="0 0 8 5"><path d="M0 0h8L4 4.5z" fill="#111"/></svg>

<div class="a" style="left:396px;top:558px;width:92px;height:20px;border:1px solid #7a7a7a;background:#fff"></div>
<div class="t" style="left:399px;top:563px;font-size:10.8px;color:#111">15</div>
<div class="a" style="left:472px;top:559px;width:15px;height:18px;background:linear-gradient(90deg,#f0f0f0,#e0e0e0);border-left:1px solid #c8c8c8"></div>
<svg class="a" style="left:475px;top:561px" width="9" height="14" viewBox="0 0 9 14"><path d="M1 5L4.5 1.5 8 5z M1 9l3.5 3.5L8 9z" fill="#222"/></svg>

<div class="a" style="left:396px;top:582px;width:92px;height:20px;border:1px solid #7a7a7a;background:#fff"></div>
<div class="t" style="left:399px;top:587px;font-size:10.8px;color:#111">40</div>
<div class="a" style="left:472px;top:583px;width:15px;height:18px;background:linear-gradient(90deg,#f0f0f0,#e0e0e0);border-left:1px solid #c8c8c8"></div>
<svg class="a" style="left:475px;top:585px" width="9" height="14" viewBox="0 0 9 14"><path d="M1 5L4.5 1.5 8 5z M1 9l3.5 3.5L8 9z" fill="#222"/></svg>

<div class="yel" style="top:605px;height:19px">=REPLACE(Params!PieLabelMode.STR, " ", "")</div>
<div class="yel" style="top:627px;height:21px">=Params!BeginAngle.STR</div>
<div class="yel" style="top:650px;height:21px">=Params!SweepAngle.STR</div>

<div class="fx" style="left:690px;top:536px">&#x192;x</div>
<div class="fx" style="left:690px;top:558px">&#x192;x</div>
<div class="fx" style="left:690px;top:582px">&#x192;x</div>
<div class="fx" style="left:690px;top:605px">&#x192;x</div>
<div class="fx" style="left:690px;top:627px">&#x192;x</div>
<div class="fx" style="left:690px;top:650px">&#x192;x</div>

<!-- footer -->
<div class="t" style="left:274px;top:916px;font-size:7.6px;color:#666">Copyright &copy; 2012 Nevron Software. All rights reserved.</div>

</body></html>
